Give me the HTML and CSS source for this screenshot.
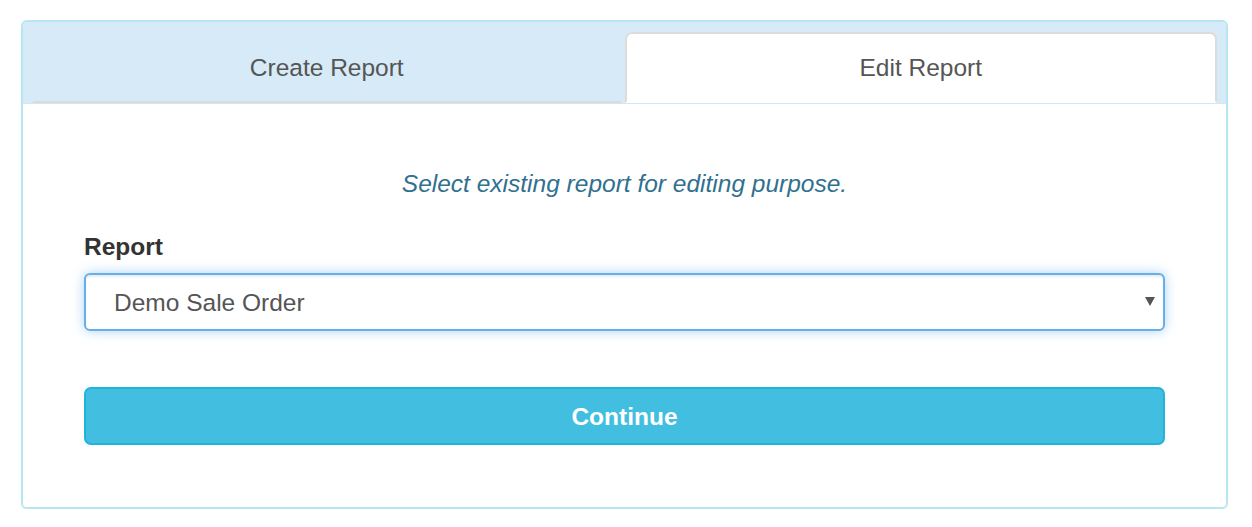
FILE: index.html
```html
<!DOCTYPE html>
<html>
<head>
<meta charset="utf-8">
<link rel="stylesheet" href="styles.css">
</head>
<body>
<div class="panel">
  <div class="panel-heading">
    <ul class="tabs">
      <li class="tab"><a class="tab-link">Create Report</a></li>
      <li class="tab active"><a class="tab-link">Edit Report</a></li>
    </ul>
  </div>
  <div class="panel-body">
    <p class="subtitle">Select existing report for editing purpose.</p>
    <label class="label" for="report">Report</label>
    <div class="select-wrap">
      <select id="report" class="select">
        <option>Demo Sale Order</option>
      </select>
      <svg class="caret" width="10" height="9" viewBox="0 0 10 9"><path d="M0 0H10L5 9Z" fill="#555"/></svg>
    </div>
    <button class="btn">Continue</button>
  </div>
</div>
</body>
</html>
```
FILE: styles.css
```css
html, body {
  margin: 0;
  padding: 0;
  background: #fff;
}
body {
  font-family: "Liberation Sans", Arial, sans-serif;
  font-size: 24.5px;
  line-height: 35px;
  color: #333;
}
.panel {
  margin: 20px 24px 0 21px;
  border: 2px solid #b5e6f2;
  border-radius: 6px;
  overflow: hidden;
  box-shadow: 0 1px 2px rgba(0,0,0,0.05);
}
.panel-heading {
  background: #d6ebf7;
  padding: 10px 9px 0 9px;
  border-bottom: 1px solid #d2e6f4;
}
.tabs {
  list-style: none;
  margin: 0;
  padding: 0;
  display: flex;
}
.tab {
  flex: 1 1 0;
  display: flex;
}
.tab-link {
  flex: 1;
  height: 71px;
  box-sizing: border-box;
  display: flex;
  align-items: center;
  justify-content: center;
  color: #555;
  margin-right: 3px;
  border: 2px solid transparent;
  border-bottom-color: #dcdcdc;
  border-radius: 7px 7px 0 0;
}
.tab.active .tab-link {
  margin-right: 0;
  background: #fff;
  border-color: #dcdcdc;
  border-bottom: 2px solid #fff;
}
.panel-body {
  padding: 62px 61px 62px;
  background: #fff;
}
.subtitle {
  margin: 0 0 28px;
  text-align: center;
  font-style: italic;
  color: #31708f;
}
.label {
  display: block;
  font-weight: bold;
  color: #333;
  margin-bottom: 9px;
}
.select-wrap {
  position: relative;
}
.select {
  -webkit-appearance: none;
  appearance: none;
  display: block;
  width: 100%;
  height: 58px;
  box-sizing: border-box;
  border: 2px solid #66afe9;
  border-radius: 6px;
  background: #fff;
  font-family: "Liberation Sans", Arial, sans-serif;
  font-size: 24.5px;
  color: #555;
  padding: 0 28px;
  outline: none;
  box-shadow: inset 0 2px 2px rgba(0,0,0,0.075), 0 0 12px rgba(102,175,233,0.55);
}
.caret {
  position: absolute;
  right: 10px;
  top: 24px;
}
.btn {
  display: block;
  width: 100%;
  height: 58px;
  margin-top: 56px;
  box-sizing: border-box;
  border: 2px solid #1fb5da;
  border-radius: 7px;
  background: #41bee0;
  color: #fff;
  font-family: "Liberation Sans", Arial, sans-serif;
  font-size: 24.5px;
  font-weight: bold;
  padding: 2px 0 0;
}
```
